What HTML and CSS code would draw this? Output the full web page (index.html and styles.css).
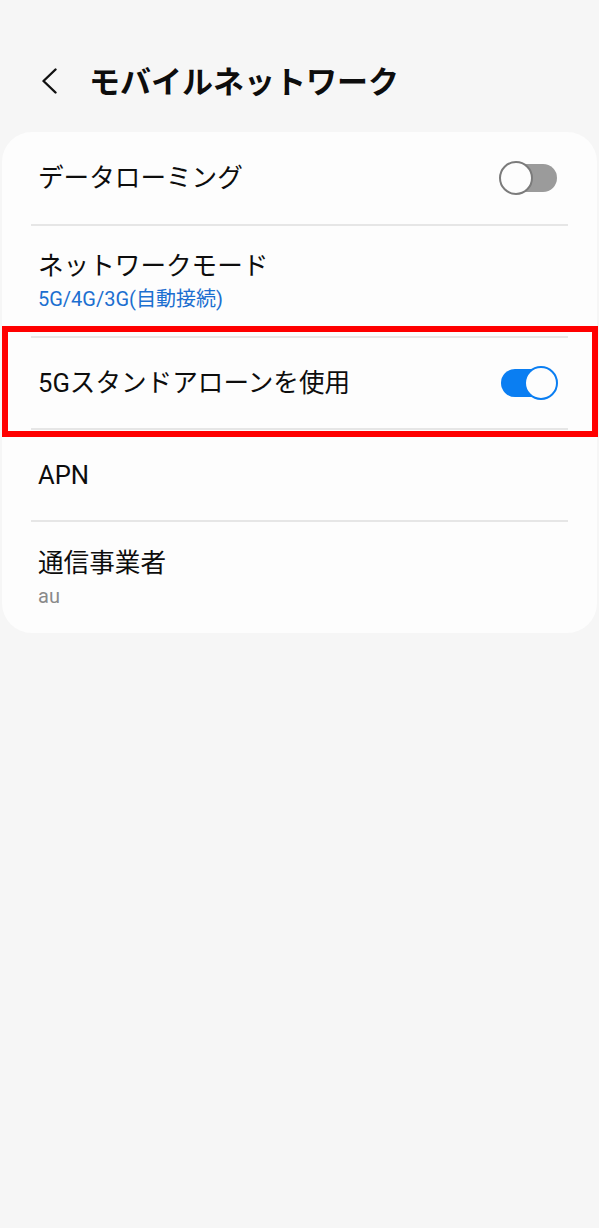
FILE: index.html
```html
<!DOCTYPE html>
<html lang="ja">
<head>
<meta charset="utf-8">
<title>モバイルネットワーク</title>
<link rel="stylesheet" href="styles.css">
</head>
<body>
<header class="header">
  <svg class="back" width="18" height="26" viewBox="0 0 18 26" aria-hidden="true">
    <path d="M15.5 1.5 L3.5 13 L15.5 24.5" fill="none" stroke="#111" stroke-width="2.4" stroke-linecap="round" stroke-linejoin="round"/>
  </svg>
  <h1 class="title">モバイルネットワーク</h1>
</header>
<main class="card">
  <div class="row row-first">
    <div class="label"><div class="name">データローミング</div></div>
    <div class="toggle"><span class="track"></span><span class="knob"></span></div>
  </div>
  <div class="row row-double">
    <div class="label">
      <div class="name">ネットワークモード</div>
      <div class="sub sub-blue">5G/4G/3G(自動接続)</div>
    </div>
  </div>
  <div class="row row-single highlight">
    <div class="label"><div class="name">5Gスタンドアローンを使用</div></div>
    <div class="toggle on"><span class="track"></span><span class="knob"></span></div>
  </div>
  <div class="row row-single">
    <div class="label"><div class="name">APN</div></div>
  </div>
  <div class="row row-double row-last">
    <div class="label">
      <div class="name">通信事業者</div>
      <div class="sub sub-gray">au</div>
    </div>
  </div>
</main>
</body>
</html>
```

FILE: styles.css
```css
html, body {
  margin: 0;
  padding: 0;
}
body {
  background: #f6f6f6;
  font-family: Roboto, "Noto Sans CJK JP", sans-serif;
  color: #111111;
  width: 599px;
  min-height: 1228px;
}
.header {
  box-sizing: border-box;
  height: 132px;
  padding: 28px 0 0 40px;
  display: flex;
  align-items: center;
}
.back {
  display: block;
  margin-top: 2px;
}
.title {
  margin: 0 0 0 31px;
  font-family: "Noto Sans CJK JP", sans-serif;
  font-weight: 700;
  font-size: 31px;
  line-height: 40px;
  color: #0d0d0d;
}
.card {
  margin: 0 2px;
  background: #fdfdfd;
  border-radius: 30px;
  display: flex;
  flex-direction: column;
}
.row {
  position: relative;
  margin: 0 29px;
  padding: 0 10px 0 7px;
  display: flex;
  align-items: center;
  justify-content: space-between;
  border-top: 2px solid #e6e6e6;
}
.row-first {
  border-top: none;
  height: 92px;
}
.row-single {
  height: 90px;
}
.row-double {
  height: 110px;
}
.row-last {
  height: 111px;
}
.label {
  display: flex;
  flex-direction: column;
}
.name {
  font-size: 25.6px;
  line-height: 36px;
  color: #0d0d0d;
}
.sub {
  font-size: 20px;
  line-height: 30px;
}
.sub-blue {
  color: #1c6fd0;
}
.sub-gray {
  color: #8a8a8a;
}
.toggle {
  position: relative;
  width: 59px;
  height: 34px;
  flex: none;
}
.track {
  position: absolute;
  left: 2px;
  right: 1px;
  top: 3px;
  bottom: 3px;
  border-radius: 14px;
  background: #9b9b9b;
}
.knob {
  position: absolute;
  top: 0;
  left: 0;
  box-sizing: border-box;
  width: 34px;
  height: 34px;
  border-radius: 50%;
  background: #fdfdfd;
  border: 2px solid #7b7b7b;
}
.toggle.on .track {
  background: #0a7ef2;
}
.toggle.on .knob {
  left: auto;
  right: 0;
  border-color: #0a7ef2;
}
.highlight::after {
  content: "";
  position: absolute;
  top: -12px;
  bottom: -9px;
  left: -29px;
  right: -30px;
  border: 6px solid #ff0000;
  pointer-events: none;
}
```
